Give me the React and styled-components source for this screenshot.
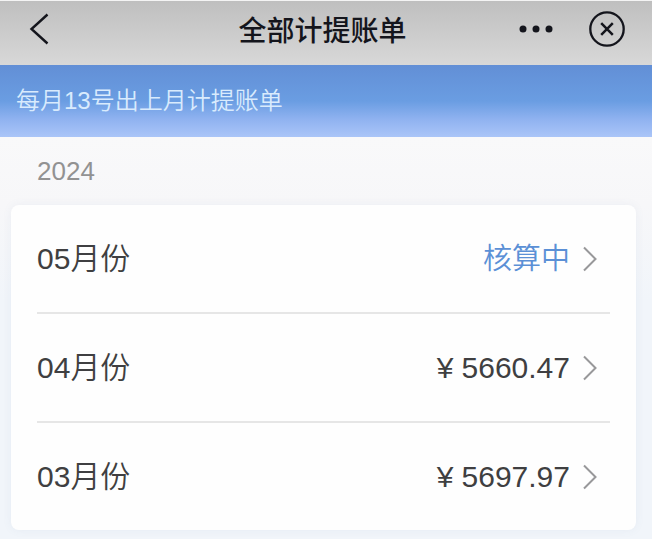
import styled, { createGlobalStyle } from "styled-components";

const ink = "#14151c";
const text = "#3f3f41";
const blue = "#5b90d6";

const bills = [
  { month: "05", status: "核算中" },
  { month: "04", amount: "5660.47" },
  { month: "03", amount: "5697.97" },
];

const App = () => {
  return (
    <>
      <GlobalStyle />
      <Header>
        <IconBtn aria-label="返回">
          <svg width="36" height="32" viewBox="0 0 36 32" fill="none" stroke={ink} strokeWidth="2.4">
            <path d="M27.5 1.5 L11.5 16 L27.5 30.5" />
          </svg>
        </IconBtn>
        <Title>全部计提账单</Title>
        <Actions>
          <IconBtn aria-label="更多">
            <svg width="34" height="8" viewBox="0 0 34 8" fill={ink}>
              <circle cx="4" cy="4" r="3.5" />
              <circle cx="17" cy="4" r="3.5" />
              <circle cx="30" cy="4" r="3.5" />
            </svg>
          </IconBtn>
          <IconBtn aria-label="关闭">
            <svg width="36" height="36" viewBox="0 0 36 36" fill="none" stroke={ink}>
              <circle cx="18" cy="18" r="16.7" strokeWidth="2.3" />
              <path d="M12.2 12.2 L23.8 23.8 M23.8 12.2 L12.2 23.8" strokeWidth="2.5" />
            </svg>
          </IconBtn>
        </Actions>
      </Header>
      <Notice>每月13号出上月计提账单</Notice>
      <main>
        <Year>2024</Year>
        <Card>
          {bills.map((bill) => (
            <li key={bill.month}>
              <Row href={`#${bill.month}`}>
                <span>{bill.month}月份</span>
                <Value>
                  {bill.status && <Status>{bill.status}</Status>}
                  {bill.amount && <Amount><span>¥</span>{bill.amount}</Amount>}
                  <svg width="14" height="26" viewBox="0 0 14 26" fill="none" stroke="#98989a" strokeWidth="2">
                    <path d="M1 1.5 L12.5 13 L1 24.5" />
                  </svg>
                </Value>
              </Row>
            </li>
          ))}
        </Card>
      </main>
    </>
  );
}

export default App;


const GlobalStyle = createGlobalStyle`
  * {
    box-sizing: border-box;
  }
  body {
    margin: 0;
    background: linear-gradient(#f9f9fa 137px, #f7f7f9 204px, #f1f5fa 300px, #f1f5fa);
    color: ${text};
    font-family: "Liberation Sans", "Noto Sans CJK SC", sans-serif;
  }
`;

const Header = styled.header`
  display: grid;
  grid-template-columns: 1fr auto 1fr;
  align-items: center;
  height: 65px;
  padding: 0 27px 8px 20px;
  border-top: 1px solid #f4f4f4;
  background: linear-gradient(#bfbfbf, #d8d8d8);
`;

const Title = styled.h1`
  margin: 0;
  color: ${ink};
  font-family: "Noto Sans CJK SC", sans-serif;
  font-size: 28px;
  font-weight: 500;
  line-height: 40px;
`;

const Actions = styled.div`
  display: flex;
  justify-content: flex-end;
  align-items: center;
  gap: 36px;
`;

const IconBtn = styled.button`
  display: flex;
  justify-self: start;
  padding: 0;
  border: 0;
  background: none;
  cursor: pointer;
`;

const Notice = styled.p`
  margin: 0;
  padding: 16px;
  background: linear-gradient(#628fd6, #6a9de2 50%, #8fb2f0 75%, #aac5f8);
  color: #d9ebfd;
  font-size: 24px;
  font-weight: 350;
  line-height: 40px;
`;

const Year = styled.h2`
  margin: 0;
  padding: 14px 37px;
  color: #929292;
  font-size: 26px;
  font-weight: 400;
  line-height: 40px;
`;

const Card = styled.ul`
  margin: 0 16px 10px 11px;
  padding: 0 26px;
  border-radius: 8px;
  background: #fefefe;
  box-shadow: 0 0 10px rgba(90, 120, 160, 0.07);
  list-style: none;
  li + li {
    border-top: 2px solid #e6e6e6;
  }
`;

const Row = styled.a`
  display: flex;
  justify-content: space-between;
  align-items: center;
  height: 107px;
  color: ${text};
  font-size: 30px;
  font-weight: 350;
  line-height: 40px;
  text-decoration: none;
`;

const Value = styled.span`
  display: flex;
  align-items: center;
  gap: 13px;
  padding-right: 13px;
`;

const Status = styled.span`
  color: ${blue};
  font-size: 29px;
`;

const Amount = styled.span`
  display: flex;
  gap: 8px;
`;
